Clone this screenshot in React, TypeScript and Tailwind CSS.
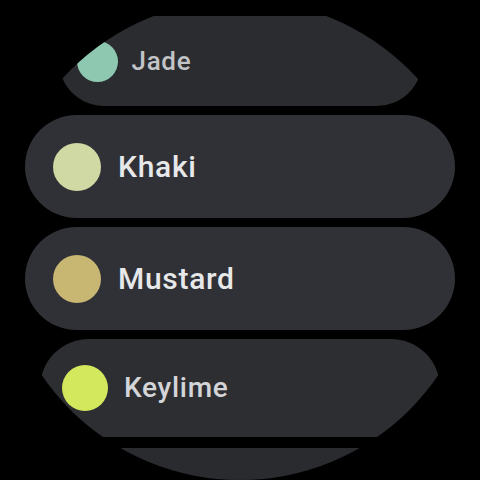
const font = { fontFamily: 'Roboto, "Noto Sans", sans-serif' }

type Chip = {
  name: string
  color: string
  card: string
  dot: string
  text: string
}

const chips: Chip[] = [
  {
    name: 'Jade',
    color: 'bg-[#8ec8b1]',
    card: 'w-[363px] h-[90px] pl-[18px] gap-[14px] bg-[#2b2c30]',
    dot: 'w-[41px] h-[41px]',
    text: 'text-[26px] text-[#c2c3c6]',
  },
  {
    name: 'Khaki',
    color: 'bg-[#d0d8a3]',
    card: 'w-[430px] h-[103px] pl-[28px] gap-[17px] bg-[#303136]',
    dot: 'w-[48px] h-[48px]',
    text: 'text-[30px] text-[#e7e8ea]',
  },
  {
    name: 'Mustard',
    color: 'bg-[#c8b673]',
    card: 'w-[430px] h-[103px] pl-[28px] gap-[17px] bg-[#303136]',
    dot: 'w-[48px] h-[48px]',
    text: 'text-[30px] text-[#e7e8ea]',
  },
  {
    name: 'Keylime',
    color: 'bg-[#d4e85d]',
    card: 'w-[400px] h-[98px] pl-[22px] gap-[16px] bg-[#2d2e32]',
    dot: 'w-[46px] h-[46px]',
    text: 'text-[28px] text-[#d4d5d8]',
  },
]

export default function App() {
  return (
    <div className="w-[480px] h-[480px] bg-black">
      <div
        className="w-[480px] h-[480px] rounded-full overflow-hidden flex flex-col items-center pt-[16px] gap-[9px]"
        style={font}
      >
        {chips.map((c) => (
          <div key={c.name} className={`shrink-0 rounded-full flex items-center ${c.card}`}>
            <div className={`shrink-0 rounded-full ${c.dot} ${c.color}`} />
            <span className={`font-medium tracking-[0.7px] leading-none ${c.text}`}>{c.name}</span>
          </div>
        ))}
        <div className="shrink-0 mt-[2px] w-[370px] h-[90px] rounded-full bg-[#2a2b2f]" />
      </div>
    </div>
  )
}
